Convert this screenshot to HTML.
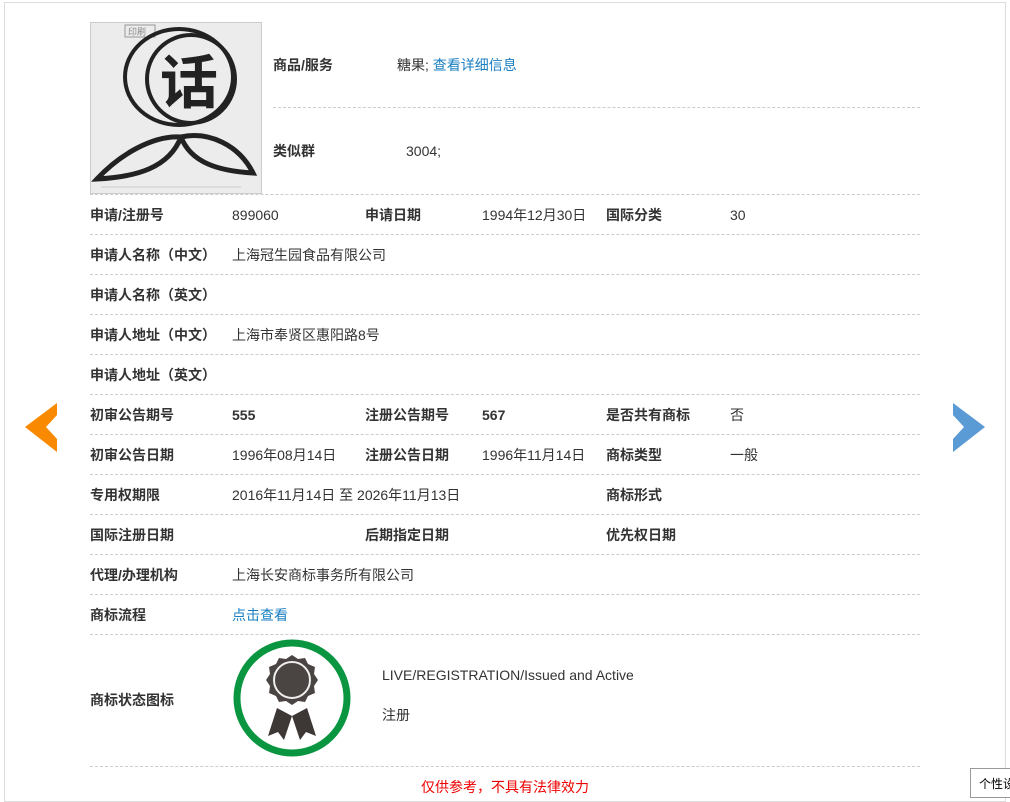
<!DOCTYPE html>
<html><head><meta charset="utf-8"><style>
*{margin:0;padding:0;box-sizing:border-box}
body{width:1010px;height:790px;background:#fff;position:relative;overflow:hidden;font-family:"Liberation Sans","Noto Sans CJK SC",sans-serif;font-size:14px;color:#333}
.frame{position:absolute;left:4px;top:2px;width:1002px;height:800px;border:1px solid #ddd}
.t{position:absolute;white-space:nowrap;line-height:16px}
.b{font-weight:bold}
.hl{position:absolute;height:0;border-top:1px dashed #ccc}
a{color:#1a7fc1;text-decoration:none}
</style></head><body>
<div class="frame"></div>
<div style="position:absolute;left:90px;top:22px;width:172px;height:172px;border:1px solid #ccc;background:#ececec">
<svg width="170" height="170" viewBox="0 0 170 170">
<rect x="34" y="2" width="30" height="12" fill="none" stroke="#999" stroke-width="1"/>
<text x="37" y="12" font-size="9" fill="#888" font-family="Noto Sans CJK SC">印刷</text>
<ellipse cx="88" cy="54" rx="54" ry="48" fill="none" stroke="#222" stroke-width="4"/>
<circle cx="100" cy="56" r="44" fill="none" stroke="#222" stroke-width="4"/>
<text x="98" y="80" text-anchor="middle" font-size="58" font-weight="bold" fill="#222" font-family="Noto Sans CJK SC">话</text>
<path d="M90 114 C62 112 28 132 6 156 C45 154 78 145 90 114 Z" fill="none" stroke="#222" stroke-width="5"/>
<path d="M90 114 C118 108 148 122 162 150 C128 148 100 140 90 114 Z" fill="none" stroke="#222" stroke-width="5"/>
<line x1="10" y1="164" x2="150" y2="164" stroke="#ccc" stroke-width="1"/>
</svg></div>
<div class="t b" style="left:273px;top:57px">商品/服务</div>
<div class="t" style="left:397px;top:57px">糖果; <a>查看详细信息</a></div>
<div class="hl" style="left:273px;top:107px;width:647px"></div>
<div class="t b" style="left:273px;top:143px">类似群</div>
<div class="t" style="left:406px;top:143px">3004;</div>
<div class="hl" style="left:90px;top:194px;width:830px"></div>
<div class="hl" style="left:90px;top:234px;width:830px"></div>
<div class="hl" style="left:90px;top:274px;width:830px"></div>
<div class="hl" style="left:90px;top:314px;width:830px"></div>
<div class="hl" style="left:90px;top:354px;width:830px"></div>
<div class="hl" style="left:90px;top:394px;width:830px"></div>
<div class="hl" style="left:90px;top:434px;width:830px"></div>
<div class="hl" style="left:90px;top:474px;width:830px"></div>
<div class="hl" style="left:90px;top:514px;width:830px"></div>
<div class="hl" style="left:90px;top:554px;width:830px"></div>
<div class="hl" style="left:90px;top:594px;width:830px"></div>
<div class="hl" style="left:90px;top:634px;width:830px"></div>
<div class="hl" style="left:90px;top:766px;width:830px"></div>

<div class="t b" style="left:90px;top:207px">申请/注册号</div><div class="t" style="left:232px;top:207px">899060</div>
<div class="t b" style="left:365px;top:207px">申请日期</div><div class="t" style="left:482px;top:207px">1994年12月30日</div>
<div class="t b" style="left:606px;top:207px">国际分类</div><div class="t" style="left:730px;top:207px">30</div>

<div class="t b" style="left:90px;top:247px">申请人名称（中文）</div><div class="t" style="left:232px;top:247px">上海冠生园食品有限公司</div>
<div class="t b" style="left:90px;top:287px">申请人名称（英文）</div>
<div class="t b" style="left:90px;top:327px">申请人地址（中文）</div><div class="t" style="left:232px;top:327px">上海市奉贤区惠阳路8号</div>
<div class="t b" style="left:90px;top:367px">申请人地址（英文）</div>

<div class="t b" style="left:90px;top:407px">初审公告期号</div><div class="t b" style="left:232px;top:407px">555</div>
<div class="t b" style="left:365px;top:407px">注册公告期号</div><div class="t b" style="left:482px;top:407px">567</div>
<div class="t b" style="left:606px;top:407px">是否共有商标</div><div class="t" style="left:730px;top:407px">否</div>

<div class="t b" style="left:90px;top:447px">初审公告日期</div><div class="t" style="left:232px;top:447px">1996年08月14日</div>
<div class="t b" style="left:365px;top:447px">注册公告日期</div><div class="t" style="left:482px;top:447px">1996年11月14日</div>
<div class="t b" style="left:606px;top:447px">商标类型</div><div class="t" style="left:730px;top:447px">一般</div>

<div class="t b" style="left:90px;top:487px">专用权期限</div><div class="t" style="left:232px;top:487px">2016年11月14日 至 2026年11月13日</div>
<div class="t b" style="left:606px;top:487px">商标形式</div>

<div class="t b" style="left:90px;top:527px">国际注册日期</div>
<div class="t b" style="left:365px;top:527px">后期指定日期</div>
<div class="t b" style="left:606px;top:527px">优先权日期</div>

<div class="t b" style="left:90px;top:567px">代理/办理机构</div><div class="t" style="left:232px;top:567px">上海长安商标事务所有限公司</div>
<div class="t b" style="left:90px;top:607px">商标流程</div><div class="t"  style="left:232px;top:607px"><a>点击查看</a></div>

<div class="t b" style="left:90px;top:692px">商标状态图标</div>
<svg style="position:absolute;left:232px;top:638px" width="120" height="120" viewBox="0 0 120 120">
<circle cx="60" cy="60" r="55" fill="none" stroke="#0a9640" stroke-width="7"/>
<path d="M45 70 L36 98 L46 94 L52 102 L60 78 Z M75 70 L84 98 L74 94 L68 102 L60 78 Z" fill="#3d3735"/>
<path d="M60 17 L66 21 L73 20 L76 26 L83 29 L82 36 L86 42 L82 48 L83 55 L76 58 L73 64 L66 63 L60 67 L54 63 L47 64 L44 58 L37 55 L38 48 L34 42 L38 36 L37 29 L44 26 L47 20 L54 21 Z" fill="#4a4442"/>
<circle cx="60" cy="42" r="18" fill="#4a4442" stroke="#eee" stroke-width="2"/>
</svg>
<div class="t" style="left:382px;top:667px;font-size:14px">LIVE/REGISTRATION/Issued and Active</div>
<div class="t" style="left:382px;top:707px">注册</div>
<div class="t" style="left:421px;top:779px;color:#e00;font-size:14px">仅供参考，不具有法律效力</div>

<svg style="position:absolute;left:24px;top:402px" width="36" height="52"><polygon points="33,1 1,25 33,50 33,37 22,25 33,13" fill="#f98a00"/></svg>
<svg style="position:absolute;left:952px;top:402px" width="36" height="52"><polygon points="1,1 33,25 1,50 1,37 12,25 1,13" fill="#5b9bd5"/></svg>

<div style="position:absolute;left:970px;top:768px;width:50px;height:30px;border:1px solid #999;background:#fff;font-size:12px;padding:6px 0 0 8px;color:#000">个性设</div>
</body></html>
